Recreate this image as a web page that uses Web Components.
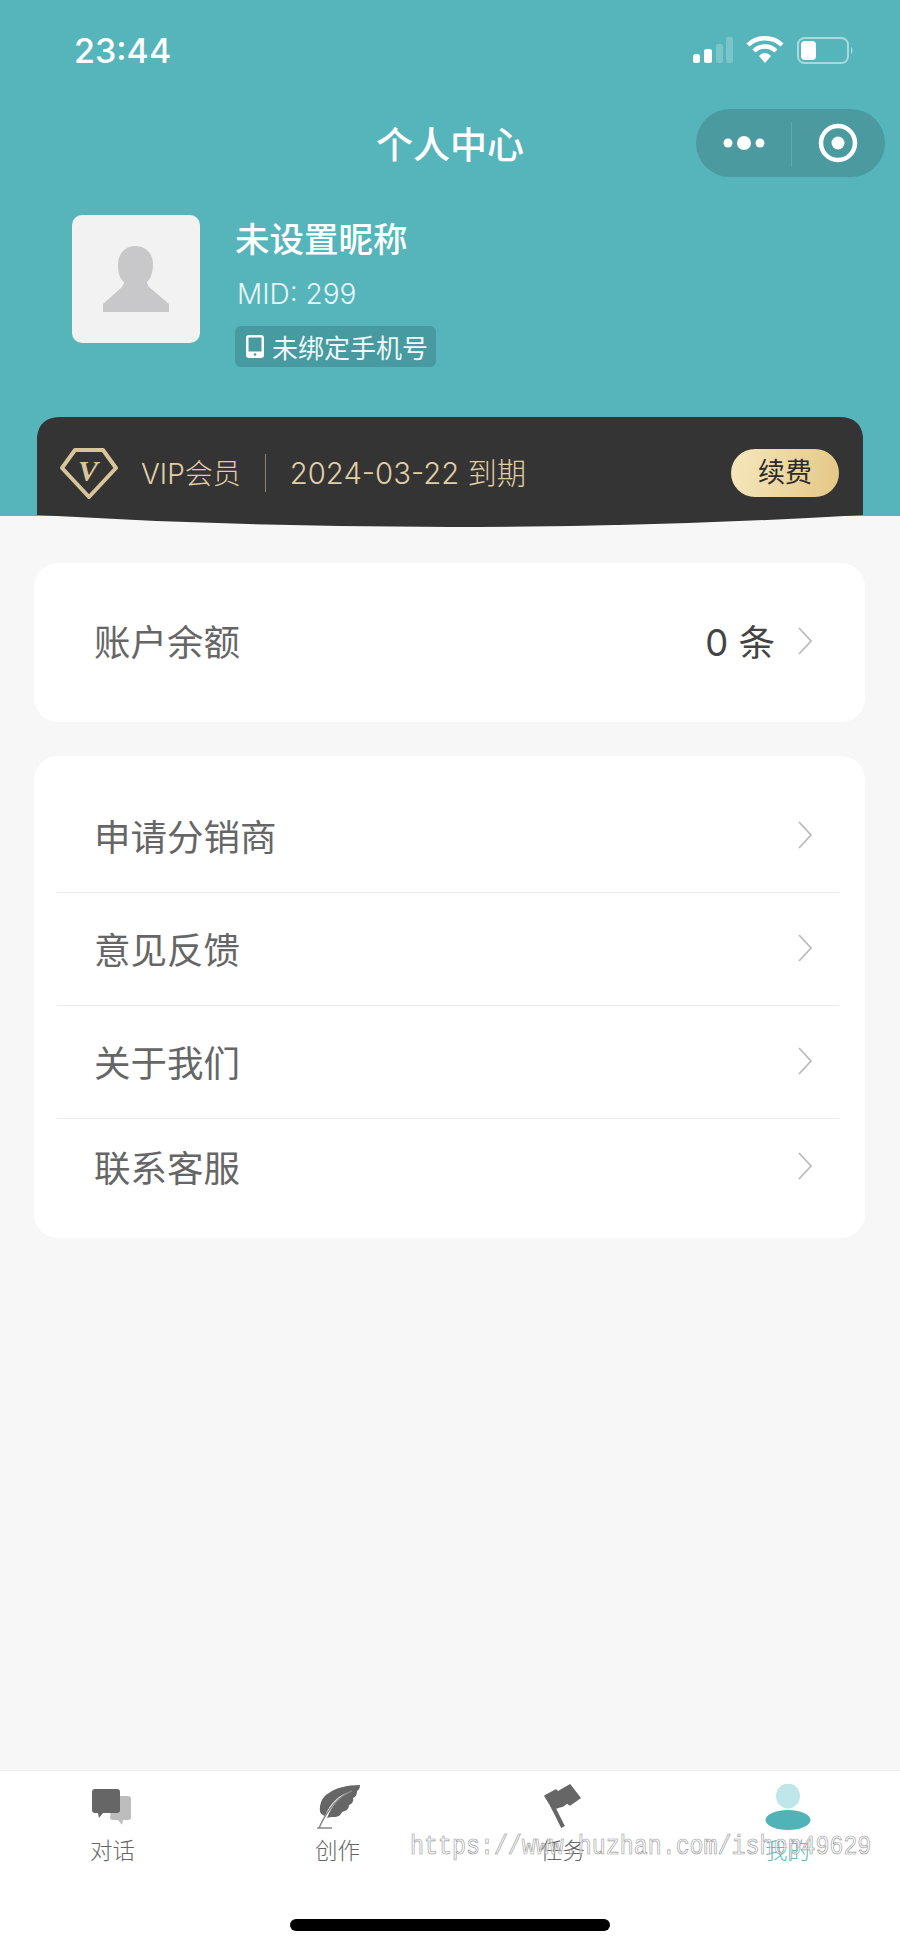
<!DOCTYPE html>
<html lang="zh">
<head>
<meta charset="utf-8">
<title>个人中心</title>
<style>
    html, body { margin: 0; padding: 0; }
    body {
        width: 900px;
        height: 1948px;
        overflow: hidden;
        background: #f7f7f7;
        font-family: "Inter", "Noto Sans CJK SC", sans-serif;
    }
    #page { display: flex; flex-direction: column; height: 1948px; position: relative; }
    #content { flex: 1; display: flex; flex-direction: column; gap: 34px; padding: 47px 35px 0 34px; }
</style>
</head>
<body>
<div id="page">
    <profile-header>
        <span slot="time">23:44</span>
        <span slot="title">个人中心</span>
        <span slot="name">未设置昵称</span>
        <span slot="mid">MID: 299</span>
        <span slot="phone">未绑定手机号</span>
        <vip-bar slot="vip" expire="2024-03-22 到期" action="续费"></vip-bar>
    </profile-header>

    <div id="content">
        <menu-card style="height:159px">
            <menu-row value="0 条" last style="height:159px; padding-bottom:4px">账户余额</menu-row>
        </menu-card>
        <menu-card style="height:482px; padding-top:28px">
            <menu-row style="height:109px; padding-bottom:6px">申请分销商</menu-row>
            <menu-row style="height:113px; padding-bottom:2px">意见反馈</menu-row>
            <menu-row style="height:113px; padding-bottom:2px">关于我们</menu-row>
            <menu-row last style="height:100px; padding-bottom:6px">联系客服</menu-row>
        </menu-card>
    </div>

    <tab-bar>
        <tab-item label="对话">
            <svg width="46" height="46" viewBox="0 0 46 46">
                <path d="M23 12h15a3 3 0 0 1 3 3v18a3 3 0 0 1-3 3h-5l-1 5-4-5h-5a3 3 0 0 1-3-3z" fill="#bdbdbd"/>
                <path d="M5 5h22a3 3 0 0 1 3 3v18a3 3 0 0 1-3 3H13l-4 5-1-5H5a3 3 0 0 1-3-3V8a3 3 0 0 1 3-3z" fill="#666"/>
            </svg>
        </tab-item>
        <tab-item label="创作">
            <svg width="46" height="46" viewBox="0 0 46 46">
                <path d="M45 1c0 3-1 5-3 6 0 3-1 6-4 7 1 3-1 6-4 7 0 4-3 6-7 7-1 3-4 5-8 5-3 0-5 0-7 1C17 21 26 11 37 7 25 10 15 19 10 32c-2-1-4-2-5-4C4 19 8 12 14 9 20 4 32 1 45 1z" fill="#666"/>
                <path d="M37 7C24 12 13 24 4 44M2 44h15" fill="none" stroke="#888" stroke-width="1.400"/>
            </svg>
        </tab-item>
        <tab-item label="任务">
            <svg width="46" height="46" viewBox="0 0 46 46">
                <path d="M5 12l11-6 2 2 12-7 10 13-10 7-3-2-4 3-4 1-6 2z" fill="#666" stroke="#666" stroke-width="1.500" stroke-linejoin="round"/>
                <path d="M12 21l11 22" fill="none" stroke="#666" stroke-width="4"/>
            </svg>
        </tab-item>
        <tab-item label="我的" active>
            <svg width="46" height="46" viewBox="0 0 46 46">
                <ellipse cx="23" cy="12" rx="12" ry="12.500" fill="#bfe6e8"/>
                <ellipse cx="23" cy="36" rx="22.500" ry="10" fill="#4fb3b8"/>
            </svg>
        </tab-item>
    </tab-bar>

    <water-mark>https://www.huzhan.com/ishop49629</water-mark>
</div>

<script>
class ProfileHeader extends HTMLElement {
    constructor() {
        super();
        this.attachShadow({ mode: "open" });
        this.shadowRoot.innerHTML = `
            <style>
                :host {
                    display: flex;
                    flex-direction: column;
                    flex: none;
                    height: 516px;
                    background: #56b5bb;
                    color: #fff;
                    position: relative;
                    z-index: 1;
                }
                .status {
                    height: 100px;
                    display: flex;
                    align-items: center;
                    justify-content: space-between;
                    padding: 0 47px 0 74px;
                }
                .time { font-size: 34px; font-weight: 500; }
                .nav {
                    height: 86px;
                    display: flex;
                    align-items: center;
                    justify-content: flex-end;
                    padding-right: 15px;
                    position: relative;
                }
                .title {
                    position: absolute;
                    left: 0;
                    right: 0;
                    top: 24px;
                    line-height: 44px;
                    text-align: center;
                    font-size: 37px;
                    font-weight: 500;
                }
                .capsule {
                    width: 189px;
                    height: 68px;
                    border-radius: 34px;
                    background: #4a9aa0;
                    display: grid;
                    grid-template-columns: 95px 94px;
                    align-items: center;
                    justify-items: center;
                    position: relative;
                }
                .capsule::after {
                    content: "";
                    position: absolute;
                    left: 95px;
                    top: 13px;
                    bottom: 10px;
                    width: 1px;
                    background: #5fa9ae;
                }
                .profile {
                    display: flex;
                    gap: 35px;
                    margin: 29px 0 0 72px;
                    height: 128px;
                }
                .avatar {
                    width: 128px;
                    height: 128px;
                    border-radius: 10px;
                    background: #f2f2f2;
                }
                .info { display: flex; flex-direction: column; align-items: flex-start; }
                .name { flex: none; font-size: 34.500px; font-weight: 500; line-height: 44px; margin-top: 3px; }
                .mid { flex: none; font-size: 28px; font-weight: 300; line-height: 40px; margin-top: 12px; margin-left: 2px; color: #e9f6f7; }
                .tag {
                    flex: none;
                    margin-top: 12px;
                    height: 41px;
                    width: 201px;
                    box-sizing: border-box;
                    border-radius: 6px;
                    background: #469aa0;
                    display: flex;
                    align-items: center;
                    gap: 8px;
                    padding-left: 11px;
                    font-size: 26px;
                    color: #eef8f8;
                }
                .vip { margin: 74px 37px -11px 37px; display: block; }
            </style>
            <div class="status">
                <div class="time"><slot name="time"></slot></div>
                <svg width="161" height="28" viewBox="0 0 161 28">
                    <rect x="1" y="18" width="7" height="9" rx="2.500" fill="#fff"/>
                    <rect x="12" y="13" width="8" height="14" rx="2.500" fill="#fff"/>
                    <rect x="24" y="8" width="7" height="19" rx="2" fill="#fff" opacity=".22"/>
                    <rect x="34" y="1" width="7" height="26" rx="2" fill="#fff" opacity=".22"/>
                    <path d="M56 9C65 0 81 0 90 9" fill="none" stroke="#fff" stroke-width="4.500"/>
                    <path d="M62 15C68 9 78 9 84 15" fill="none" stroke="#fff" stroke-width="4.500"/>
                    <path d="M67 20C71 16 75 16 79 20L73 27z" fill="#fff"/>
                    <rect x="106" y="2" width="50" height="25" rx="6.500" fill="none" stroke="#a5dbde" stroke-width="2"/>
                    <rect x="109" y="5" width="15" height="19" rx="4" fill="#fff"/>
                    <path d="M159 11c2 .5 2 6.500 0 7z" fill="#a5dbde"/>
                </svg>
            </div>
            <div class="nav">
                <div class="title"><slot name="title"></slot></div>
                <div class="capsule">
                    <svg width="46" height="16" viewBox="0 0 46 16">
                        <circle cx="7" cy="8" r="4.500" fill="#fff"/>
                        <circle cx="23" cy="8" r="7" fill="#fff"/>
                        <circle cx="39" cy="8" r="4.500" fill="#fff"/>
                    </svg>
                    <svg width="40" height="40" viewBox="0 0 40 40">
                        <circle cx="20" cy="20" r="17" fill="none" stroke="#fff" stroke-width="4.500"/>
                        <circle cx="20" cy="20" r="6.500" fill="#fff"/>
                    </svg>
                </div>
            </div>
            <div class="profile">
                <div class="avatar">
                    <svg width="128" height="128" viewBox="0 0 128 128">
                        <path d="M31 97V89L50 72C51 70 52 69 52 67C47 63 46 57 46 50C46 39 53 31 63 31C74 31 81 39 81 49C81 57 79 63 75 67C75 69 76 70 77 72L97 89V97Z" fill="#c8c8ca"/>
                    </svg>
                </div>
                <div class="info">
                    <div class="name"><slot name="name"></slot></div>
                    <div class="mid"><slot name="mid"></slot></div>
                    <div class="tag">
                        <svg width="18" height="23" viewBox="0 0 18 23" style="flex:none">
                            <path fill-rule="evenodd" d="M3 0h12a3 3 0 0 1 3 3v17a3 3 0 0 1-3 3H3a3 3 0 0 1-3-3V3a3 3 0 0 1 3-3zM2.500 2.500v14h13v-14z" fill="#fff"/>
                            <circle cx="9" cy="19.500" r="1.300" fill="#469aa0"/>
                        </svg>
                        <slot name="phone"></slot>
                    </div>
                </div>
            </div>
            <div class="vip"><slot name="vip"></slot></div>
        `;
    }
}

class VipBar extends HTMLElement {
    connectedCallback() {
        const expire = this.getAttribute("expire");
        const action = this.getAttribute("action");
        this.attachShadow({ mode: "open" });
        this.shadowRoot.innerHTML = `
            <style>
                :host { display: block; }
                .bar {
                    width: 826px;
                    height: 110px;
                    box-sizing: border-box;
                    background: #343434;
                    clip-path: path("M0 20 Q2 0 24 0 H802 Q824 0 826 20 V98 Q413 122 0 98 Z");
                    display: flex;
                    align-items: flex-start;
                    padding: 30px 24px 0 22px;
                    color: #e2cea6;
                    font-weight: 300;
                }
                .label { margin: 3px 0 0 22px; font-size: 28px; line-height: 48px; white-space: nowrap; }
                .sep { width: 1px; height: 38px; margin: 7px 24px 0 24px; background: #8d8372; }
                .date { margin-top: 3px; font-size: 29.300px; line-height: 48px; white-space: nowrap; flex: 1; }
                .btn {
                    flex: none;
                    width: 108px;
                    height: 48px;
                    border-radius: 24px;
                    background: linear-gradient(100deg, #f6e7bd, #e4c786);
                    color: #2b2b2b;
                    font-size: 27px;
                    font-weight: 400;
                    line-height: 48px;
                    text-align: center;
                    margin-top: 2px;
                }
            </style>
            <div class="bar">
                <svg width="60" height="54" viewBox="0 0 60 54" style="flex:none">
                    <path d="M16 3H44L57 21 30 50 3 21Z" fill="none" stroke="#d9c59a" stroke-width="4" stroke-linejoin="round"/>
                    <text x="29" y="34" text-anchor="middle" font-family="Liberation Serif" font-style="italic" font-weight="700" font-size="30" fill="#d9c59a">V</text>
                </svg>
                <div class="label">VIP会员</div>
                <div class="sep"></div>
                <div class="date">${expire}</div>
                <div class="btn">${action}</div>
            </div>
        `;
    }
}

class MenuCard extends HTMLElement {
    constructor() {
        super();
        this.attachShadow({ mode: "open" });
        this.shadowRoot.innerHTML = `
            <style>
                :host {
                    display: block;
                    box-sizing: border-box;
                    background: #fff;
                    border-radius: 24px;
                    flex: none;
                }
            </style>
            <slot></slot>
        `;
    }
}

class MenuRow extends HTMLElement {
    connectedCallback() {
        const value = this.getAttribute("value");
        const last = this.hasAttribute("last");
        this.attachShadow({ mode: "open" });
        this.shadowRoot.innerHTML = `
            <style>
                :host {
                    display: flex;
                    align-items: center;
                    box-sizing: border-box;
                    margin: 0 26px 0 23px;
                    padding: 0 27px 0 37px;
                    border-bottom: ${last ? "none" : "1px solid #ececec"};
                    font-size: 36.500px;
                    color: #666;
                }
                .text { flex: 1; }
                .value { color: #444; margin-right: 23px; }
            </style>
            <div class="text"><slot></slot></div>
            ${value ? `<div class="value">${value}</div>` : ""}
            <svg width="14" height="28" viewBox="0 0 14 28">
                <path d="M1 1L13 14 1 27" fill="none" stroke="#bbb" stroke-width="1.800"/>
            </svg>
        `;
    }
}

class TabBar extends HTMLElement {
    constructor() {
        super();
        this.attachShadow({ mode: "open" });
        this.shadowRoot.innerHTML = `
            <style>
                :host {
                    display: block;
                    flex: none;
                    height: 178px;
                    box-sizing: border-box;
                    background: #fff;
                    border-top: 1px solid #eeeeee;
                }
                .tabs { display: grid; grid-template-columns: repeat(4, 225px); padding-top: 13px; }
                .home { width: 320px; height: 12px; border-radius: 6px; background: #000; margin: 53px auto 0; }
            </style>
            <div class="tabs"><slot></slot></div>
            <div class="home"></div>
        `;
    }
}

class TabItem extends HTMLElement {
    connectedCallback() {
        const label = this.getAttribute("label");
        const active = this.hasAttribute("active");
        this.attachShadow({ mode: "open" });
        this.shadowRoot.innerHTML = `
            <style>
                :host { display: flex; flex-direction: column; align-items: center; }
                .label {
                    margin-top: 6px;
                    font-size: 22.500px;
                    font-weight: 300;
                    line-height: 30px;
                    color: ${active ? "#5cbcc1" : "#666"};
                }
            </style>
            <slot></slot>
            <div class="label">${label}</div>
        `;
    }
}

class WaterMark extends HTMLElement {
    constructor() {
        super();
        this.attachShadow({ mode: "open" });
        this.shadowRoot.innerHTML = `
            <style>
                :host {
                    position: absolute;
                    left: 410px;
                    top: 1832px;
                    font-family: "Liberation Mono", monospace;
                    font-size: 23.300px;
                    line-height: 30px;
                    color: rgba(255,255,255,0.6);
                    -webkit-text-stroke: 0.6px #999;
                    white-space: nowrap;
                    transform: scaleY(1.2);
                }
            </style>
            <slot></slot>
        `;
    }
}

customElements.define("profile-header", ProfileHeader);
customElements.define("vip-bar", VipBar);
customElements.define("menu-card", MenuCard);
customElements.define("menu-row", MenuRow);
customElements.define("tab-bar", TabBar);
customElements.define("tab-item", TabItem);
customElements.define("water-mark", WaterMark);
</script>
</body>
</html>
